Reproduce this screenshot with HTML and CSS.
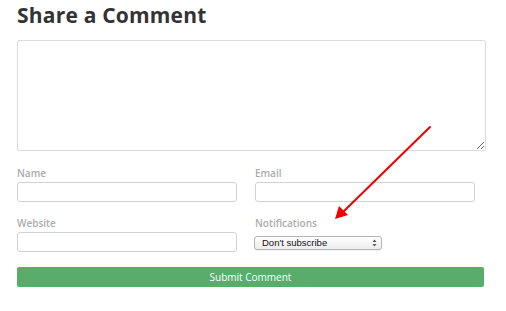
FILE: index.html
```html
<!DOCTYPE html>
<html>
<head>
<meta charset="utf-8">
<link rel="stylesheet" href="styles.css">
</head>
<body>
<div class="page">
  <h1 class="title">Share a Comment</h1>
  <form class="form">
    <textarea class="comment"></textarea>
    <div class="fields">
      <div class="field">
        <label class="label">Name</label>
        <input class="input" type="text">
      </div>
      <div class="field">
        <label class="label">Email</label>
        <input class="input" type="text">
      </div>
      <div class="field">
        <label class="label">Website</label>
        <input class="input" type="text">
      </div>
      <div class="field">
        <label class="label">Notifications</label>
        <div class="select">
          <span class="select-text">Don't subscribe</span>
          <svg class="select-arrows" width="5" height="8" viewBox="0 0 5 8"><path d="M0.5 3 L2.5 0.5 L4.5 3 Z M0.5 5 L2.5 7.5 L4.5 5 Z" fill="#555"/></svg>
        </div>
      </div>
    </div>
    <button class="submit" type="button">Submit Comment</button>
  </form>
  <svg class="arrow" width="506" height="311" viewBox="0 0 506 311">
    <line x1="430" y1="127" x2="343" y2="212" stroke="#f00000" stroke-width="2" stroke-linecap="round"/>
    <polygon points="335,219 339,206 348,215" fill="#f00000"/>
  </svg>
</div>
</body>
</html>
```

FILE: styles.css
```css
html, body {
  margin: 0;
  padding: 0;
  background: #fff;
}
.page {
  position: relative;
  width: 506px;
  height: 311px;
  padding: 0 0 0 17px;
  box-sizing: border-box;
  font-family: "Open Sans", "Liberation Sans", sans-serif;
}
.title {
  margin: 0;
  padding-top: 3px;
  font-size: 21px;
  line-height: 24px;
  font-weight: 700;
  color: #333;
  letter-spacing: 0.2px;
}
.form {
  display: flex;
  flex-direction: column;
  margin-top: 13px;
}
.comment {
  display: block;
  width: 469px;
  height: 111px;
  box-sizing: border-box;
  border: 1px solid #dcdcdc;
  border-radius: 2px;
  margin: 0;
  resize: vertical;
}
.fields {
  display: grid;
  grid-template-columns: 220px 220px;
  column-gap: 18px;
  row-gap: 14px;
  margin-top: 15px;
}
.field {
  display: flex;
  flex-direction: column;
}
.label {
  font-size: 10px;
  line-height: 14px;
  font-weight: 600;
  color: #ababab;
  height: 16px;
}
.input {
  display: block;
  width: 220px;
  height: 20px;
  box-sizing: border-box;
  border: 1px solid #d2d2d2;
  border-radius: 3px;
  margin: 0;
  padding: 0 4px;
}
.select {
  display: flex;
  align-items: center;
  justify-content: space-between;
  width: 128px;
  height: 14px;
  box-sizing: border-box;
  margin: 4px 0 0 -1px;
  padding: 0 4px 0 7px;
  border: 1px solid #b4b4b4;
  border-radius: 3px;
  background: linear-gradient(#ffffff, #ececec);
  box-shadow: 0 1px 0 rgba(0,0,0,0.06);
}
.select-text {
  font-family: "Liberation Sans", Arial, sans-serif;
  font-size: 9.5px;
  line-height: 12px;
  color: #111;
}
.select-arrows {
  display: block;
}
.submit {
  display: block;
  width: 467px;
  height: 20px;
  margin-top: 15px;
  border: 0;
  border-radius: 2px;
  background: #58ad6b;
  color: #fff;
  font-family: "Open Sans", "Liberation Sans", sans-serif;
  font-size: 10px;
  line-height: 20px;
  padding: 0;
  text-align: center;
}
.arrow {
  position: absolute;
  left: 0;
  top: 0;
  pointer-events: none;
}
```
